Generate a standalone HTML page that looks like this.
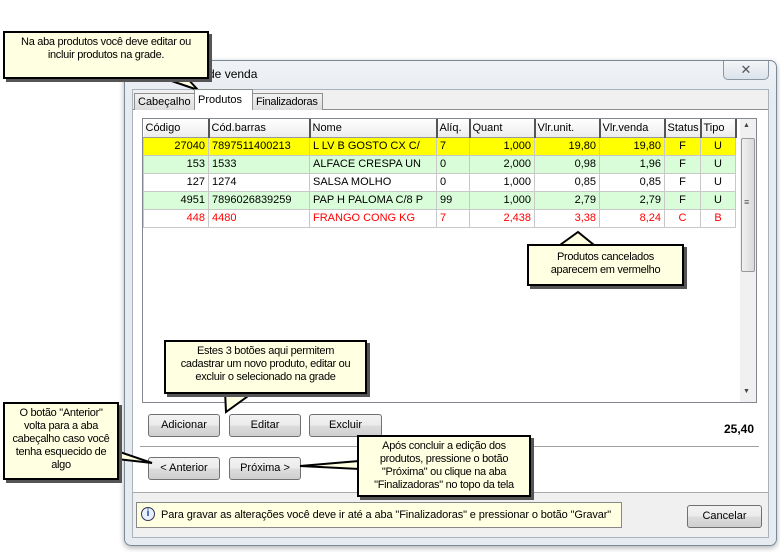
<!DOCTYPE html>
<html><head><meta charset="utf-8"><style>
*{box-sizing:border-box;margin:0;padding:0}
body{width:780px;height:552px;background:#fff;position:relative;overflow:hidden;font-family:"Liberation Sans",sans-serif;font-size:11px;color:#000}
.a{position:absolute}
.win{left:124px;top:60px;width:653px;height:486px;border:1px solid #7a8a99;border-radius:7px;background:linear-gradient(#f0f3f6,#e6ebf0 40px,#e6ebf0);box-shadow:0 2px 6px rgba(0,0,0,.3)}
.client{left:132px;top:89px;width:637px;height:449px;background:#f0f0f0;border:1px solid #a9b3bd}
.tab{top:93px;height:17px;border:1px solid #8e8f8f;border-bottom:none;background:linear-gradient(#f2f2f2,#dcdcdc);padding:2px 3px 0;font-size:11px;white-space:nowrap}
.btn{height:23px;border:1px solid #707070;border-radius:3px;background:linear-gradient(#f2f2f2 0,#ebebeb 50%,#dddddd 51%,#cfcfcf);text-align:center;line-height:21px;font-size:11px}
.grid{left:142px;top:118px;width:615px;height:285px;border:1px solid #828790;background:#fff}
table{border-collapse:collapse;position:absolute;left:143px;top:119px;font-size:11px;table-layout:fixed;width:592px}
td{height:18px;border:1px solid #c8c8c8;padding:0 3px;white-space:nowrap;overflow:hidden}
th{height:18px;font-weight:normal;text-align:left;padding:0 2px;background:linear-gradient(#fff,#ececec);border-right:2px solid #555;border-bottom:1px solid #999;white-space:nowrap;overflow:hidden}
.r{text-align:right}.c{text-align:center}
.y td{background:#ffff00}.g td{background:#d9fdd9}.red td{color:#ff0000}
.call{background:#ffffe1;border:2px solid #000;box-shadow:3px 3px 0 #555;text-align:center;font-size:11px;line-height:13px;padding-top:3px;letter-spacing:-0.3px;white-space:nowrap}
</style></head><body>
<div class="a win"></div>
<div class="a" style="left:198px;top:67px;font-size:12px">g de venda</div>
<div class="a" style="left:723px;top:61px;width:46px;height:19px;border:1px solid #8a96a3;border-top:none;border-radius:0 0 5px 5px;background:linear-gradient(#f4f6f8,#dbe2ea);text-align:center;color:#555;font-size:13px;line-height:17px">✕</div>
<div class="a client"></div>
<div class="a" style="left:133px;top:109px;width:635px;height:1px;background:#8e8f8f"></div>
<div class="a tab" style="left:134px;width:61px">Cabeçalho</div>
<div class="a tab" style="left:194px;top:89px;height:21px;width:59px;background:#fff;z-index:2;padding-top:4px">Produtos</div>
<div class="a tab" style="left:252px;width:71px;letter-spacing:-0.3px">Finalizadoras</div>
<div class="a" style="left:133px;top:110px;width:635px;height:383px;background:#fff;border-bottom:1px solid #aaa"></div>
<div class="a grid"></div>
<table>
<colgroup><col style="width:65px"><col style="width:101px"><col style="width:127px"><col style="width:33px"><col style="width:65px"><col style="width:65px"><col style="width:65px"><col style="width:36px"><col style="width:35px"></colgroup>
<tr><th>Código</th><th>Cód.barras</th><th>Nome</th><th>Alíq.</th><th>Quant</th><th>Vlr.unit.</th><th>Vlr.venda</th><th>Status</th><th>Tipo</th></tr>
<tr class="y"><td class="r">27040</td><td>7897511400213</td><td>L LV B GOSTO CX C/</td><td>7</td><td class="r">1,000</td><td class="r">19,80</td><td class="r">19,80</td><td class="c">F</td><td class="c">U</td></tr>
<tr class="g"><td class="r">153</td><td>1533</td><td>ALFACE CRESPA UN</td><td>0</td><td class="r">2,000</td><td class="r">0,98</td><td class="r">1,96</td><td class="c">F</td><td class="c">U</td></tr>
<tr><td class="r">127</td><td>1274</td><td>SALSA MOLHO</td><td>0</td><td class="r">1,000</td><td class="r">0,85</td><td class="r">0,85</td><td class="c">F</td><td class="c">U</td></tr>
<tr class="g"><td class="r">4951</td><td>7896026839259</td><td>PAP H PALOMA C/8 P</td><td>99</td><td class="r">1,000</td><td class="r">2,79</td><td class="r">2,79</td><td class="c">F</td><td class="c">U</td></tr>
<tr class="red"><td class="r">448</td><td>4480</td><td>FRANGO CONG KG</td><td>7</td><td class="r">2,438</td><td class="r">3,38</td><td class="r">8,24</td><td class="c">C</td><td class="c">B</td></tr>
</table>
<div class="a" style="left:740px;top:119px;width:16px;height:283px;background:#f0f0f0"></div>
<div class="a" style="left:741px;top:138px;width:14px;height:134px;border:1px solid #999;border-radius:2px;background:linear-gradient(90deg,#f0f0f0,#dadada)"></div>
<div class="a" style="left:743px;top:122px;font-size:7px;color:#444">▲</div>
<div class="a" style="left:743px;top:388px;font-size:7px;color:#444">▼</div>
<div class="a" style="left:744px;top:197px;font-size:9px;color:#555">≡</div>

<div class="a btn" style="left:148px;top:414px;width:72px">Adicionar</div>
<div class="a btn" style="left:229px;top:414px;width:72px">Editar</div>
<div class="a btn" style="left:309px;top:414px;width:73px">Excluir</div>
<div class="a" style="left:724px;top:422px;font-weight:bold;font-size:12px">25,40</div>
<div class="a" style="left:140px;top:446px;width:619px;height:1px;background:#a0a0a0"></div>
<div class="a btn" style="left:148px;top:457px;width:72px">&lt; Anterior</div>
<div class="a btn" style="left:229px;top:457px;width:72px">Próxima &gt;</div>

<div class="a" style="left:136px;top:502px;width:486px;height:26px;background:#ffffe1;border:1px solid #888;padding:6px 0 0 24px;font-size:11px;letter-spacing:-0.12px;white-space:nowrap">Para gravar as alterações você deve ir até a aba "Finalizadoras" e pressionar o botão "Gravar"</div>
<div class="a" style="left:141px;top:507px;width:14px;height:14px;border:1px solid #335;border-radius:50%;background:#e8f0ff;color:#1a3e9a;font-weight:bold;font-size:10px;text-align:center;line-height:12px">i</div>
<div class="a btn" style="left:687px;top:505px;width:75px">Cancelar</div>

<svg class="a" style="left:0;top:0" width="780" height="552">
<g fill="#ffffe1" stroke="#000" stroke-width="2">
<polygon points="160,77 198,90 186,77"/>
<polygon points="560,245 578,232 594,245"/>
<polygon points="225,391 226,412 255,391"/>
<polygon points="117,451 152,463 117,459"/>
<polygon points="359,461 300,466 359,469"/>
</g></svg>
<div class="a call" style="left:3px;top:31px;width:206px;height:48px">Na aba produtos você deve editar ou<br>incluir produtos na grade.</div>
<div class="a call" style="left:527px;top:244px;width:157px;height:42px;padding-top:5px">Produtos cancelados<br>aparecem em vermelho</div>
<div class="a call" style="left:164px;top:340px;width:203px;height:54px">Estes 3 botões aqui permitem<br>cadastrar um novo produto, editar ou<br>excluir o selecionado na grade</div>
<div class="a call" style="left:3px;top:402px;width:116px;height:78px">O botão "Anterior"<br>volta para a aba<br>cabeçalho caso você<br>tenha esquecido de<br>algo</div>
<div class="a call" style="left:357px;top:435px;width:174px;height:62px">Após concluir a edição dos<br>produtos, pressione o botão<br>"Próxima" ou clique na aba<br>"Finalizadoras" no topo da tela</div>
</body></html>
